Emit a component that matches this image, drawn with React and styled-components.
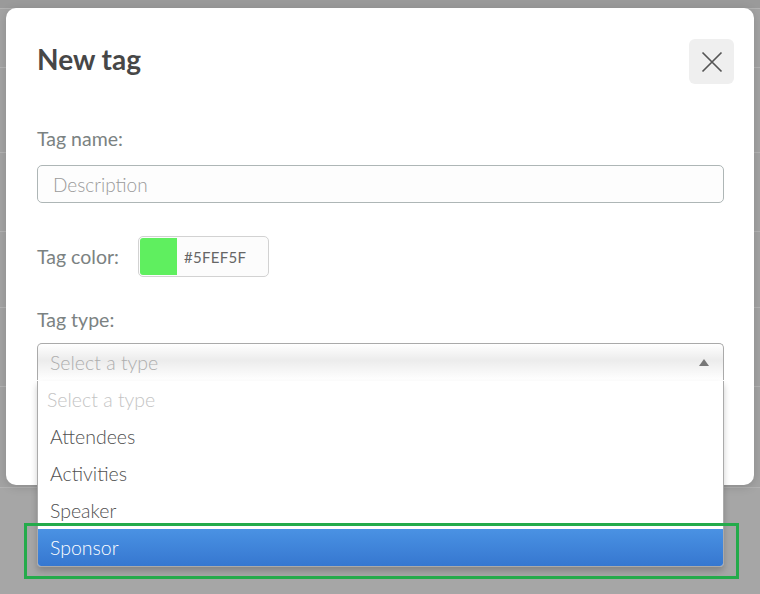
import * as React from "react";
import styled, { createGlobalStyle } from "styled-components";

const GlobalStyle = createGlobalStyle`
  html, body {
    margin: 0;
    padding: 0;
    width: 760px;
    height: 594px;
    overflow: hidden;
    background: #a4a4a4;
    font-family: Lato, "Open Sans", sans-serif;
  }
`;

const Page = styled.div`
  position: relative;
  width: 760px;
  height: 594px;
  display: flex;
  flex-direction: column;
  background: #a6a6a6;
`;

const PageRow = styled.div`
  height: ${props => props.h}px;
  flex-shrink: 0;
  border-bottom: 1px solid #b3b3b3;
  background: ${props => props.bg || "#a3a3a3"};
`;

const Modal = styled.div`
  position: absolute;
  left: 6px;
  top: 8px;
  width: 748px;
  height: 477px;
  box-sizing: border-box;
  background: #fff;
  border-radius: 10px;
  padding: 31px 20px 0 31px;
  box-shadow: 0 2px 10px rgba(0, 0, 0, 0.15);
`;

const Header = styled.div`
  display: flex;
  justify-content: space-between;
  align-items: flex-start;
  margin-bottom: 44px;
`;

const Title = styled.h2`
  margin: 3px 0 0;
  font-size: 28px;
  line-height: 34px;
  font-weight: 700;
  color: #474747;
`;

const CloseButton = styled.button`
  width: 45px;
  height: 45px;
  border: none;
  border-radius: 6px;
  background: #efefef;
  display: flex;
  align-items: center;
  justify-content: center;
  padding: 0;
`;

const Label = styled.div`
  font-size: 19.5px;
  color: #7b8282;
  line-height: 22px;
`;

const Field = styled.div`
  margin-bottom: ${props => props.mb}px;
`;

const TextInput = styled.input`
  margin-top: 15px;
  width: 687px;
  height: 38px;
  box-sizing: border-box;
  border: 1px solid #aeb6b6;
  border-radius: 5px;
  background: #fdfdfd;
  padding: 0 15px;
  font-family: Lato, sans-serif;
  font-size: 19px;
  font-weight: 300;
  &::placeholder {
    color: #9a9a9a;
  }
`;

const ColorRow = styled.div`
  display: flex;
  align-items: center;
  gap: 19px;
`;

const ColorPicker = styled.div`
  display: flex;
  width: 131px;
  height: 41px;
  box-sizing: border-box;
  border: 1px solid #d2d2d2;
  border-radius: 5px;
  background: #fcfcfc;
  padding: 1px;
  align-items: stretch;
`;

const Swatch = styled.div`
  width: 37px;
  background: ${props => props.color};
  border-radius: 3px 0 0 3px;
`;

const HexText = styled.span`
  align-self: center;
  margin-left: 7px;
  font-size: 15px;
  color: #666;
  letter-spacing: 0.3px;
`;

const SelectBox = styled.div`
  margin-top: 12px;
  width: 687px;
  height: 37px;
  box-sizing: border-box;
  border: 1px solid #aaa;
  border-bottom: none;
  border-radius: 5px 5px 0 0;
  background: linear-gradient(#ffffff 0%, #ececec 45%, #ffffff 100%);
  display: flex;
  align-items: center;
  justify-content: space-between;
  padding: 0 14px 0 12px;
  font-size: 19.5px;
  font-weight: 300;
  color: #aeaeae;
`;

const Caret = styled.span`
  width: 0;
  height: 0;
  border-left: 5px solid transparent;
  border-right: 5px solid transparent;
  border-bottom: 7px solid #777;
`;

const Dropdown = styled.ul`
  position: absolute;
  left: 37px;
  top: 381px;
  width: 687px;
  box-sizing: border-box;
  margin: 0;
  padding: 0;
  list-style: none;
  background: #fff;
  border: 1px solid #aaa;
  border-top: none;
  border-radius: 0 0 4px 4px;
  box-shadow: 0 4px 6px rgba(0, 0, 0, 0.2);
  overflow: hidden;
`;

const Option = styled.li`
  height: 37px;
  display: flex;
  align-items: center;
  padding: 0 12px;
  font-size: 19.5px;
  font-weight: 300;
  color: ${props =>
    props.active ? "#fff" : props.disabled ? "#c4c4c4" : "#505050"};
  background: ${props =>
    props.active ? "linear-gradient(#4a92e3, #3677d0)" : "transparent"};
  margin-left: ${props => (props.disabled ? "-3px" : "0")};
`;

const Highlight = styled.div`
  position: absolute;
  left: 24px;
  top: 523px;
  width: 715px;
  height: 56px;
  box-sizing: border-box;
  border: 3px solid #24ab4b;
  pointer-events: none;
`;

const types = ["Attendees", "Activities", "Speaker", "Sponsor"];

const App = () => {
  return (
    <>
      <GlobalStyle />
      <Page>
        <PageRow h={8} bg="#9a9a9a" />
        <PageRow h={58} />
        <PageRow h={84} />
        <PageRow h={78} />
        <PageRow h={75} />
        <PageRow h={78} />
        <PageRow h={100} />
        <Modal>
          <Header>
            <Title>New tag</Title>
            <CloseButton>
              <svg width="22" height="22" viewBox="0 0 22 22">
                <path
                  d="M1.5 1.5 L20.5 20.5 M20.5 1.5 L1.5 20.5"
                  stroke="#555"
                  strokeWidth="1.7"
                  fill="none"
                />
              </svg>
            </CloseButton>
          </Header>
          <Field mb={33}>
            <Label>Tag name:</Label>
            <TextInput placeholder="Description" />
          </Field>
          <Field mb={32}>
            <ColorRow>
              <Label>Tag color:</Label>
              <ColorPicker>
                <Swatch color="#5FEF5F" />
                <HexText>#5FEF5F</HexText>
              </ColorPicker>
            </ColorRow>
          </Field>
          <Field mb={0}>
            <Label>Tag type:</Label>
            <SelectBox>
              <span>Select a type</span>
              <Caret />
            </SelectBox>
          </Field>
        </Modal>
        <Dropdown>
          <Option disabled>Select a type</Option>
          {types.map(t => (
            <Option key={t} active={t === "Sponsor"}>
              {t}
            </Option>
          ))}
        </Dropdown>
        <Highlight />
      </Page>
    </>
  );
};

export default App;
